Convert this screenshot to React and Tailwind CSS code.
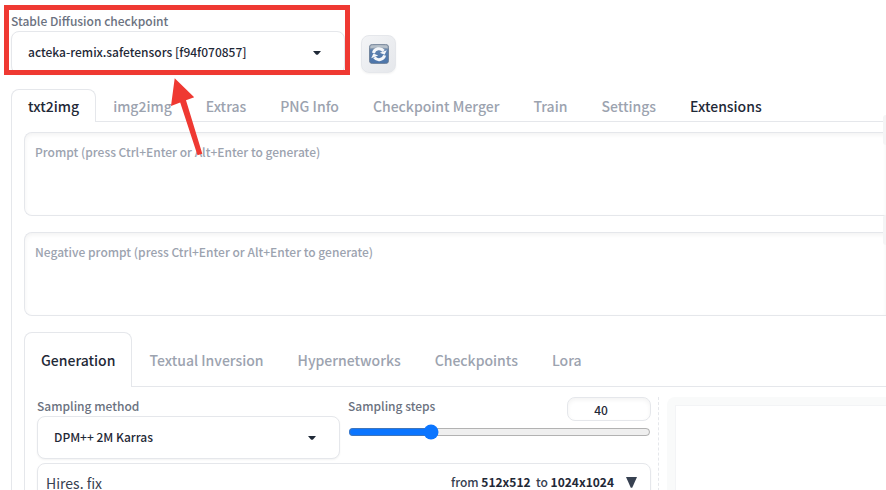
import React from "react";
import clsx from "clsx";

const mainTabs = ["txt2img", "img2img", "Extras", "PNG Info", "Checkpoint Merger", "Train", "Settings", "Extensions"];
const subTabs = ["Generation", "Textual Inversion", "Hypernetworks", "Checkpoints", "Lora"];

function Caret() {
  return (
    <svg className="pointer-events-none absolute top-1/2 right-6 h-1 w-2 -translate-y-1/2" viewBox="0 0 8 4">
      <path d="M0 0h8L5 3.4Q4 4.3 3 3.4Z" fill="#1f2937" />
    </svg>
  );
}

function Dropdown({ id, label, value }) {
  return (
    <div>
      <label htmlFor={id} className="block pb-px text-[12px] leading-[18px] font-medium text-[#6b7280]">{label}</label>
      <div className="relative">
        <select
          id={id}
          defaultValue={value}
          className="block h-[43px] w-full appearance-none rounded-lg border border-gray-200 bg-white pb-[2px] pl-4 text-[12px] leading-5 font-medium text-[#1f2937] shadow-xs outline-none"
        >
          <option>{value}</option>
        </select>
        <Caret />
      </div>
    </div>
  );
}

function Tabs({ tabs, tall }) {
  return (
    <div role="tablist" className="flex">
      {tabs.map((name, i) => (
        <button
          key={name}
          role="tab"
          aria-selected={i === 0}
          className={clsx(
            "shrink-0 text-[14px] leading-5 font-medium whitespace-nowrap",
            tall ? "h-[55px]" : "h-[33px]",
            i === 0
              ? "rounded-t-lg border border-b-0 border-gray-200 px-4 text-[#1f2937]"
              : "border-b border-gray-200 px-[17px] pt-[2px]",
            i > 0 && (name === "Extensions" ? "text-[#1f2937]" : "text-[#9ca3af]")
          )}
        >
          {name}
        </button>
      ))}
      <div className="flex-1 border-b border-gray-200" />
    </div>
  );
}

function PromptBox({ text }) {
  return (
    <textarea
      aria-label={text}
      placeholder={text}
      className="block h-[84px] w-full resize-none rounded-l-lg border border-r-0 border-gray-200 bg-white px-[10px] py-[9px] text-[12px] leading-5 font-medium text-[#1f2937] shadow-[inset_0_2px_4px_rgba(0,0,0,0.05)] outline-none placeholder:text-[#9ca3af]"
    />
  );
}

function RefreshIcon() {
  return (
    <svg viewBox="0 0 20 20" className="h-5 w-5">
      <defs>
        <linearGradient id="tile" x1="0" y1="0" x2="0" y2="1">
          <stop offset="0" stopColor="#a9b3bd" />
          <stop offset="0.2" stopColor="#8c9db0" />
          <stop offset="0.3" stopColor="#5c80ae" />
          <stop offset="1" stopColor="#4b74a9" />
        </linearGradient>
      </defs>
      <rect x="0.4" y="0.4" width="19.2" height="19.2" rx="3" fill="url(#tile)" stroke="#64778f" strokeWidth="0.8" />
      <path d="M1.5 1.8Q10 0.8 18.5 1.8V4.2Q10 3 1.5 4.2Z" fill="#cbd2d8" opacity="0.6" />
      <g fill="none" stroke="#f5f7fa" strokeWidth="3">
        <path d="M4.4 9A5.8 5.8 0 0 1 14.6 7" />
        <path d="M15.6 11.4A5.8 5.8 0 0 1 5.4 13.4" />
      </g>
      <path d="M17.8 6.2L15.6 10.8L10.8 8.8Z" fill="#f5f7fa" />
      <path d="M2.2 14.2L4.4 9.6L9.2 11.6Z" fill="#f5f7fa" />
    </svg>
  );
}

export default function App() {
  return (
    <div className="relative h-screen overflow-hidden bg-white pl-[11px] font-['Noto_Sans_CJK_SC',sans-serif] text-[#1f2937]">
      <header className="flex items-end gap-4 pt-3">
        <div className="w-[334px]">
          <Dropdown id="checkpoint" label="Stable Diffusion checkpoint" value="acteka-remix.safetensors [f94f070857]" />
        </div>
        <button
          aria-label="Refresh checkpoints"
          className="mb-px flex h-[38px] w-[35px] items-center justify-center rounded-lg border border-gray-200 bg-linear-to-br from-gray-100 to-gray-200 shadow-xs"
        >
          <RefreshIcon />
        </button>
      </header>

      <main className="pt-[15px]">
        <Tabs tabs={mainTabs} />
        <section className="border-l border-gray-200 pt-[10px] pl-3">
          <div className="flex flex-col gap-4">
            <PromptBox text="Prompt (press Ctrl+Enter or Alt+Enter to generate)" />
            <PromptBox text="Negative prompt (press Ctrl+Enter or Alt+Enter to generate)" />
          </div>
          <div className="pt-4">
            <Tabs tabs={subTabs} tall />
            <div className="grid grid-cols-[622fr_227fr] border-l border-gray-200 pt-[10px] pl-3">
              <div className="border-r border-dashed border-gray-200 pr-[7px]">
                <div className="grid grid-cols-2 gap-2">
                  <Dropdown id="sampler" label="Sampling method" value="DPM++ 2M Karras" />
                  <div>
                    <div className="flex items-start justify-between">
                      <label htmlFor="steps" className="text-[12px] leading-[18px] font-medium text-[#6b7280]">Sampling steps</label>
                      <input
                        aria-label="Sampling steps value"
                        defaultValue="40"
                        className="h-6 w-[84px] rounded-lg border border-gray-200 pr-4 text-center text-[12px] leading-5 font-medium shadow-[inset_0_2px_4px_rgba(0,0,0,0.05)] outline-none"
                      />
                    </div>
                    <input id="steps" type="range" min="1" max="150" defaultValue="40" className="mt-[3px] block h-4 w-full accent-[#0b75ff]" />
                  </div>
                </div>
                <button className="mt-1 flex h-[60px] w-full items-start rounded-lg border border-gray-200 px-2 pt-[9px] text-left shadow-xs">
                  <span className="flex-1 text-[14px] leading-5 text-[#374151]">Hires. fix</span>
                  <span className="text-[12px] leading-[18px] font-medium whitespace-pre text-[#374151]">
                    from <b className="text-[#1f2937]">512x512</b>{"  "}to <b className="text-[#1f2937]">1024x1024</b>
                  </span>
                  <svg viewBox="0 0 11 11" className="mt-1 mr-[5px] ml-3 h-[11px] w-[11px]">
                    <path d="M0 0h11L6.2 10.8H4.8Z" fill="#374151" />
                  </svg>
                </button>
              </div>
              <div className="ml-2 h-[200px] rounded-tl-lg bg-[#f9fafa] pt-2 pl-2">
                <div className="h-full border-t border-l border-[#f3f4f6] bg-white" />
              </div>
            </div>
          </div>
        </section>
      </main>

      <div className="absolute top-[115px] right-0 h-[30px] w-[3px] rounded-l-lg bg-[#f4f4f5]" />
      <div className="absolute top-[215px] right-0 h-[30px] w-[3px] rounded-l-lg bg-[#f4f4f5]" />

      <div className="pointer-events-none absolute top-[5px] left-1 h-[70px] w-[346px] border-5 border-[#ef3932]" />
      <svg className="pointer-events-none absolute top-[76px] left-[168px] h-20 w-9" viewBox="168 76 36 80">
        <path d="M174.7 78.3L194.2 97.3L186 100.2L202.3 153.8L197.5 155.3L180.2 102.6L171 106Z" fill="#ef3932" />
      </svg>
    </div>
  );
}
